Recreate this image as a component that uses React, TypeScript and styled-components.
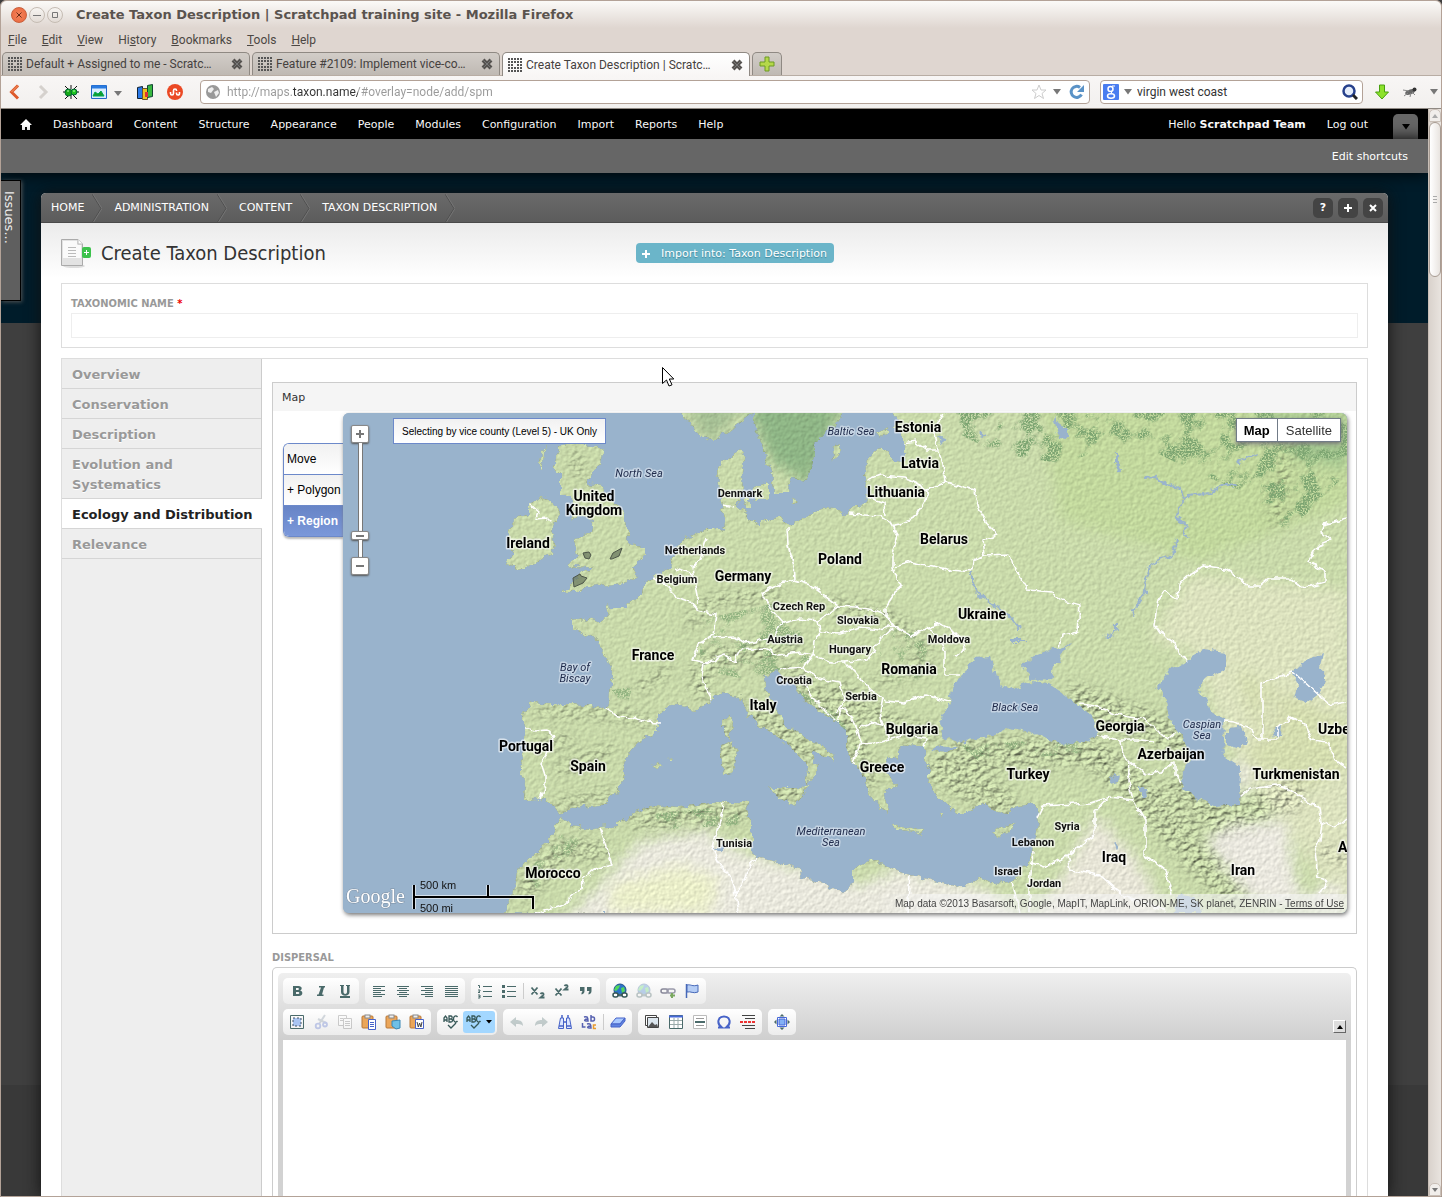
import React, { ReactNode } from "react";
import styled, { createGlobalStyle, css } from "styled-components";

const sans = '"DejaVu Sans", Verdana, sans-serif';
const condensed = '"DejaVu Sans Condensed", "DejaVu Sans", sans-serif';
const chromeFont = 'Roboto, "Open Sans", sans-serif';
const arial = '"Liberation Sans", Arial, sans-serif';

const GlobalStyle = createGlobalStyle`
  * { box-sizing: border-box; }
  body { margin: 0; font-family: ${sans}; font-size: 11px; color: #333; background: #3f3f3f; }
  button, input { font: inherit; color: inherit; margin: 0; }
  button { padding: 0; border: 0; background: none; cursor: default; }
  a { color: inherit; text-decoration: none; }
  ul, ol { list-style: none; margin: 0; padding: 0; }
`;

/* ---------- browser window ---------- */

const Window = styled.div`
  height: 100vh;
  display: flex;
  flex-direction: column;
  overflow: hidden;
  position: relative;
  border: 1px solid #b3a297;
  border-radius: 6px 6px 0 0;
  background: #dfd6d0;
`;

const TitleBar = styled.header`
  flex: none;
  height: 27px;
  display: flex;
  align-items: center;
  gap: 2px;
  padding-left: 10px;
  background: linear-gradient(#fbfaf8, #dfd6d0);
  border-radius: 6px 6px 0 0;
`;

const WindowTitle = styled.h1`
  margin: 0 0 0 11px;
  font: bold 13px/24px ${sans};
  color: #5a534e;
`;

const WindowButton = styled.button<{ $close?: boolean }>`
  width: 16px;
  height: 16px;
  display: grid;
  place-items: center;
  border-radius: 50%;
  border: 1px solid ${(p) => (p.$close ? "#c9603c" : "#c5bcb3")};
  background: ${(p) => (p.$close ? "radial-gradient(#f4845c, #e8653b)" : "linear-gradient(#f7f5f2, #e2dbd5)")};
  svg { display: block; }
`;

const MenuBar = styled.nav`
  flex: none;
  height: 24px;
  display: flex;
  gap: 15px;
  padding-left: 7px;
  font: 12px/24px ${chromeFont};
  color: #4c4743;
`;

const TabStrip = styled.div`
  flex: none;
  height: 24px;
  display: flex;
  align-items: stretch;
  gap: 2px;
  padding-left: 1px;
  border-bottom: 1px solid #b8ada4;
`;

const BrowserTab = styled.div<{ $active?: boolean }>`
  width: 248px;
  display: flex;
  align-items: center;
  gap: 3px;
  padding: 0 5px 0 4px;
  border: 1px solid #8f8983;
  border-bottom: 0;
  border-radius: 5px 5px 0 0;
  font: 12px/22px ${chromeFont};
  color: #45413e;
  background: ${(p) => (p.$active ? "linear-gradient(#fff, #f8f6f5)" : "linear-gradient(#d2cdc8, #bfb9b3)")};
  margin-bottom: ${(p) => (p.$active ? "-1px" : "0")};
  span { flex: 1; white-space: nowrap; overflow: hidden; }
  button { width: 14px; height: 14px; }
  svg { display: block; }
`;

const NewTab = styled.button`
  width: 30px;
  display: grid;
  place-items: center;
  border: 1px solid #8f8983;
  border-bottom: 0;
  border-radius: 5px 5px 0 0;
  background: linear-gradient(#d2cdc8, #bfb9b3);
`;

const NavBar = styled.div`
  flex: none;
  height: 33px;
  display: flex;
  align-items: center;
  gap: 10px;
  padding: 0 2px 0 4px;
  background: linear-gradient(#f8f6f5, #f2f0ee);
  border-bottom: 1px solid #8f8983;
`;

const NavButtons = styled.div`
  display: flex;
  align-items: center;
  gap: 8px;
  width: 185px;
`;

const IconButton = styled.button<{ $w?: number }>`
  width: ${(p) => p.$w || 20}px;
  height: 20px;
  display: grid;
  place-items: center;
  flex: none;
`;

const Field = styled.div<{ $width?: number }>`
  height: 24px;
  ${(p) => (p.$width ? css`width: ${p.$width}px; flex: none;` : css`flex: 1;`)}
  display: flex;
  align-items: center;
  gap: 4px;
  padding: 0 2px;
  border: 1px solid #b3a297;
  border-radius: 4px;
  background: #fff;
`;

const AddressInput = styled.input`
  flex: 1;
  min-width: 0;
  height: 20px;
  padding: 0;
  border: 0;
  outline: 0;
  font: 12px/20px ${chromeFont};
  color: transparent;
  background: linear-gradient(90deg, #999 0 66px, #333 66px 131px, #999 131px);
  background-clip: text;
  -webkit-background-clip: text;
`;

const SearchInput = styled.input`
  flex: 1;
  min-width: 0;
  padding: 0;
  border: 0;
  outline: 0;
  background: none;
  font: 12px/20px ${chromeFont};
  color: #333;
`;

const Viewport = styled.div`
  flex: 1;
  min-height: 0;
  display: flex;
`;

const Page = styled.div`
  flex: 1;
  min-width: 0;
  display: flex;
  flex-direction: column;
  position: relative;
  overflow: hidden;
`;

const ScrollTrack = styled.div`
  flex: none;
  width: 13px;
  display: flex;
  flex-direction: column;
  border-left: 1px solid #c9bfb7;
  background: linear-gradient(90deg, #d9d2cc, #e9e4df);
`;

const ScrollStep = styled.button`
  height: 13px;
  display: grid;
  place-items: center;
  border: 1px solid #c9bfb7;
  border-radius: 5px 5px 0 0;
  background: #f1eeeb;
`;

const ScrollThumb = styled.div`
  height: 155px;
  display: grid;
  place-items: center;
  border: 1px solid #a89c93;
  border-radius: 6px;
  background: linear-gradient(90deg, #fff, #e9e4e0);
`;

const ScrollSpace = styled.div`
  flex: 1;
`;

/* ---------- site administration bars ---------- */

const AdminBar = styled.nav`
  flex: none;
  height: 30px;
  display: flex;
  align-items: center;
  gap: 21px;
  padding: 2px 10px 0 19px;
  font: 11px/28px ${sans};
  color: #fff;
  background: #000;
  svg { display: block; }
`;

const Grow = styled.span`
  flex: 1;
`;

const DrawerToggle = styled.button`
  width: 25px;
  height: 25px;
  align-self: flex-end;
  margin-left: 4px;
  display: grid;
  place-items: center;
  border-radius: 5px 5px 0 0;
  background: #666;
`;

const ShortcutBar = styled.div`
  flex: none;
  height: 34px;
  display: flex;
  justify-content: flex-end;
  padding-right: 20px;
  font: 11px/36px ${sans};
  color: #fff;
  background: #666;
  z-index: 1;
  box-shadow: 0 0 16px #000;
`;

const Backdrop = styled.div`
  flex: 1;
  min-height: 0;
  display: flex;
  padding: 20px 40px 0;
  background: linear-gradient(#001c2a 0 150px, #3f3f3f 150px 912px, #393939 912px);
`;

const IssuesTab = styled.button`
  position: absolute;
  left: 0;
  top: 71px;
  width: 20px;
  height: 121px;
  padding: 10px 3px 0 0;
  writing-mode: vertical-rl;
  text-align: left;
  font: 13px/14px ${sans};
  color: #eee;
  background: #5f5f5f;
  border: 1px solid #000;
  border-left: 0;
  box-shadow: 1px 1px 4px #555;
  z-index: 2;
`;

/* ---------- overlay panel ---------- */

const Panel = styled.main`
  flex: 1;
  min-width: 0;
  display: flex;
  flex-direction: column;
  background: #fff;
  border-radius: 5px 5px 0 0;
  box-shadow: 0 0 16px #111;
`;

const Crumbs = styled.nav`
  flex: none;
  height: 30px;
  display: flex;
  align-items: center;
  font: 11px/30px ${sans};
  color: #fff;
  background: linear-gradient(#6a6a6a, #5c5c5c);
  border-bottom: 1px solid #4a4a4a;
  border-radius: 5px 5px 0 0;
  padding: 1px 0 0 10px;
  overflow: hidden;
`;

const Crumb = styled.a`
  display: flex;
  align-items: center;
  gap: 8px;
  padding-right: 12px;
  text-transform: uppercase;
  svg { display: block; }
`;

const PanelButton = styled.button`
  width: 20px;
  height: 20px;
  margin-right: 5px;
  border-radius: 5px;
  background: #444;
  color: #fff;
  display: grid;
  place-items: center;
  line-height: 20px;
  svg { display: block; }
`;

const PanelBody = styled.div`
  flex: 1;
  min-height: 0;
  display: flex;
  flex-direction: column;
  padding: 15px 20px 0;
  background: linear-gradient(#ebebeb, #fff 55px);
`;

const Heading = styled.div`
  display: grid;
  grid-template-columns: 575px auto 1fr;
  align-items: center;
  height: 30px;
  margin-bottom: 15px;
  h2 {
    display: flex;
    align-items: center;
    gap: 10px;
    margin: 0;
    font: 20px/30px ${condensed};
    color: #333;
  }
`;

const ImportButton = styled.a`
  display: flex;
  align-items: center;
  gap: 10px;
  height: 20px;
  padding: 1px 7px 0 5px;
  border-radius: 4px;
  font: 11px/19px ${sans};
  color: #fff;
  background: #6bb5c9;
  text-shadow: 0 1px 1px #3f8599;
`;

const labelText = css`
  font: bold 11px/14px ${condensed};
  text-transform: uppercase;
  color: #999;
`;

const NameBox = styled.div`
  height: 65px;
  display: flex;
  flex-direction: column;
  gap: 2px;
  padding: 13px 9px 9px;
  margin-bottom: 10px;
  border: 1px solid #ddd;
  background: #fff;
  label { ${labelText} }
  label b { color: #e00; }
  input { height: 25px; width: 100%; padding: 4px; border: 1px solid #eee; background: #fff; outline: 0; }
`;

const Tabbed = styled.div`
  flex: 1;
  min-height: 0;
  display: flex;
  border: 1px solid #ddd;
  border-bottom: 0;
`;

const TabColumn = styled.ul`
  flex: none;
  width: 200px;
  background: #eee;
  border-right: 1px solid #ccc;
`;

const TabItem = styled.li<{ $active?: boolean }>`
  padding: 6px 10px 3px;
  border-bottom: 1px solid #d5d5d5;
  font: bold 13px/20px ${sans};
  color: ${(p) => (p.$active ? "#222" : "#999")};
  text-shadow: ${(p) => (p.$active ? "none" : "0 1px 0 #fff")};
  background: ${(p) => (p.$active ? "#fff" : "transparent")};
  margin-right: ${(p) => (p.$active ? "-1px" : "0")};
  white-space: ${(p) => (p.$active ? "nowrap" : "normal")};
`;

const Pane = styled.section`
  flex: 1;
  min-width: 0;
  display: flex;
  flex-direction: column;
  padding: 23px 10px 0;
`;

const MapBox = styled.section`
  flex: none;
  border: 1px solid #ccc;
  margin-bottom: 17px;
  h3 { margin: 0 0 2px; height: 28px; padding-left: 9px; font: 11px/30px ${sans}; color: #333; background: #f5f5f5; }
`;

const MapRow = styled.div`
  display: flex;
  align-items: flex-start;
  padding: 0 9px 20px 10px;
`;

const MapTools = styled.div`
  flex: none;
  width: 60px;
  margin-top: 30px;
  border: 1px solid #6c89ca;
  border-right: 0;
  border-radius: 6px 0 0 6px;
  overflow: hidden;
  box-shadow: 0 2px 2px #bbb;
`;

const MapTool = styled.button<{ $on?: boolean }>`
  display: block;
  width: 100%;
  height: ${(p) => (p.$on ? 30 : 31)}px;
  padding-left: 3px;
  text-align: left;
  white-space: nowrap;
  font: ${(p) => (p.$on ? "bold" : "normal")} 12px/30px ${arial};
  color: ${(p) => (p.$on ? "#fff" : "#000")};
  background: ${(p) => (p.$on ? "linear-gradient(#6784c6, #7b98da)" : "linear-gradient(#f1f1f1, #fff)")};
  border-bottom: ${(p) => (p.$on ? "0" : "1px solid #6c89ca")};
`;

const MapCanvas = styled.div`
  flex: 1;
  min-width: 0;
  height: 500px;
  position: relative;
  overflow: hidden;
  border-radius: 6px;
  background: #99b3cc;
  box-shadow: 1px 2px 4px #777;
`;

const MapDrawing = styled.svg`
  display: block;
  width: 100%;
  height: 100%;
  font-family: Roboto, sans-serif;
`;

const MapNotice = styled.div`
  position: absolute;
  left: 50px;
  top: 5px;
  height: 26px;
  padding: 0 8px;
  border: 1px solid #6c89ca;
  font: 10px/25px ${arial};
  color: #000;
  background: linear-gradient(#f1f1f1, #fff);
`;

const MapTypes = styled.div`
  position: absolute;
  right: 6px;
  top: 5px;
  height: 24px;
  display: flex;
  border: 1px solid #717b87;
  box-shadow: 0 2px 4px #777;
  background: #fff;
  font: 13px/22px ${arial};
  button { padding: 1px 8px 0; color: #333; }
  button:first-child { padding: 1px 7px 0; font-weight: bold; color: #000; border-right: 1px solid #717b87; }
`;

const Zoomer = styled.div`
  position: absolute;
  left: 8px;
  top: 12px;
  height: 150px;
  width: 18px;
  display: flex;
  flex-direction: column;
  align-items: center;
`;

const ZoomKey = styled.button<{ $h?: number }>`
  flex: none;
  width: 18px;
  height: ${(p) => p.$h || 18}px;
  display: grid;
  place-items: center;
  border: 1px solid #888;
  border-radius: 2px;
  background: #fff;
  box-shadow: 0 1px 2px #555;
  svg { display: block; }
`;

const ZoomRail = styled.div<{ $h: number }>`
  flex: none;
  width: 5px;
  height: ${(p) => p.$h}px;
  background: #fff;
  border: 1px solid #777;
  border-width: 0 1px;
`;

const MapCredit = styled.div`
  position: absolute;
  right: 0;
  bottom: 0;
  padding: 0 3px 0 18px;
  font: 10px/19px ${arial};
  color: #444;
  background: linear-gradient(90deg, rgba(245, 245, 245, 0), rgba(245, 245, 245, 0.6) 50px);
  a { text-decoration: underline; }
`;

/* ---------- rich text editor ---------- */

const EditorLabel = styled.h3`
  ${labelText}
  margin: 0 0 2px;
`;

const Editor = styled.div`
  flex: 1;
  min-height: 0;
  display: flex;
  flex-direction: column;
  padding: 5px 5px 0;
  border: 1px solid #ccc;
  border-bottom: 0;
  border-radius: 5px 5px 0 0;
`;

const EditorTools = styled.div`
  flex: none;
  display: flex;
  align-items: flex-end;
  padding: 5px;
  border-radius: 5px 5px 0 0;
  background: linear-gradient(#efefef, #cfcfcf);
`;

const ToolRows = styled.div`
  flex: 1;
  display: flex;
  flex-direction: column;
  gap: 5px;
`;

const ToolRow = styled.div`
  display: flex;
  gap: 6px;
`;

const ToolGroup = styled.div`
  height: 26px;
  display: flex;
  align-items: center;
  padding: 0 2px;
  border-radius: 5px;
  background: linear-gradient(#fff, #ececec);
`;

const Tool = styled.button<{ $off?: boolean; $on?: boolean }>`
  width: ${(p) => (p.$on ? 32 : 24)}px;
  height: 22px;
  display: flex;
  align-items: center;
  justify-content: center;
  border-radius: 3px;
  background: ${(p) => (p.$on ? "#a3d7ff" : "transparent")};
  svg { display: block; opacity: ${(p) => (p.$off ? 0.3 : 1)}; }
`;

const ToolDivider = styled.span`
  width: 1px;
  height: 16px;
  margin: 0 2px;
  background: #ccc;
`;

const Collapse = styled.button`
  width: 13px;
  height: 13px;
  margin-bottom: 2px;
  display: grid;
  place-items: center;
  background: #ddd;
  border: 1px solid #888;
  border-color: #fff #666 #666 #fff;
`;

const EditorText = styled.div`
  flex: 1;
  border: 5px solid #d2d2d2;
  border-width: 0 5px;
  background: #fff;
  outline: 0;
`;

const Pointer = styled.svg`
  position: absolute;
  left: 660px;
  top: 365px;
  z-index: 5;
  pointer-events: none;
`;

/* ---------- icons ---------- */

const Svg = ({ s = 16, w, children }: { s?: number; w?: number; children: ReactNode }) => (
  <svg width={w || s} height={s} viewBox={`0 0 ${w || s} ${s}`} fill="none" aria-hidden="true">{children}</svg>
);

const Caret = ({ fill = "#777" }: { fill?: string }) => <Svg s={6} w={8}><path d="M0 0h8L4 5.500z" fill={fill} /></Svg>;

const GridIcon = () => (
  <Svg>
    {[0, 1, 2, 3, 4].flatMap((r) => [0, 1, 2, 3, 4].map((c) =>
      r === 2 && c === 2 ? null : (
        <rect key={`${r}${c}`} x={c * 3 + 1} y={r * 3 + 1} width="2" height="2" fill="#555" shapeRendering="crispEdges" />)))}
  </Svg>
);

const CloseIcon = () => (
  <Svg s={14}><path d="M3 3l8 8M11 3l-8 8" stroke="#55524f" strokeWidth="4" /><path d="M3.500 3.500l7 7M10.500 3.500l-7 7" stroke="#777" strokeWidth="1" /></Svg>
);

const teal = "#4a6a6a";
const stroke = { stroke: teal, strokeWidth: 1 };
const icons: Record<string, ReactNode> = {
  bold: <path d="M4 3h5.500c4 0 4 4 1.500 4.500 3.500.5 3 5.500-1 5.500H4V3m3 2v2h2c1.200 0 1.200-2 0-2zm0 4v2h2.200c1.500 0 1.500-2 0-2z" fill={teal} fillRule="evenodd" />,
  italic: <path d="M6 3h6v1.500h-1L9 11.500h1.500V13H4v-1.500h1.500l2.500-7H6z" fill={teal} />,
  underline: <path d="M3 2h4v1H6.500v6c0 2.500 3.500 2.500 3.500 0V3H9V2h4v1h-.5v6c0 5-8.500 5-8.500 0V3H3zM3 13h10v2H3z" fill={teal} />,
  left: <path d="M2 3.500h12M2 5.500h8M2 7.500h12M2 9.500h8M2 11.500h12M2 13.500h9" {...stroke} />,
  center: <path d="M2 3.500h12M4 5.500h8M2 7.500h12M4 9.500h8M2 11.500h12M4 13.500h8" {...stroke} />,
  right: <path d="M2 3.500h12M6 5.500h8M2 7.500h12M6 9.500h8M2 11.500h12M6 13.500h8" {...stroke} />,
  justify: <path d="M2 3.500h13M2 5.500h13M2 7.500h13M2 9.500h13M2 11.500h13M2 13.500h13" {...stroke} />,
  ol: <path d="M6 3.500h9M6 8.500h9M6 13.500h9M1 2.500h1.500V5M1 7h2v1L1 9.500h2M1 12h2v1.500H1.500M3 13.500V15H1" {...stroke} />,
  ul: <><path d="M6 3.500h9M6 8.500h9M6 13.500h9" {...stroke} /><path d="M1 2h3v3H1zM1 7h3v3H1zM1 12h3v3H1z" fill={teal} /></>,
  sub: <path d="M1.500 4.500l6 7M7.500 4.500l-6 7M10.500 11c1-1.500 3.500-1 3 .8L10.500 14.500h4" stroke={teal} strokeWidth="1.800" />,
  sup: <path d="M1.500 5.500l6 7M7.500 5.500l-6 7M10.500 3c1-1.500 3.500-1 3 .8L10.500 6.500h4" stroke={teal} strokeWidth="1.800" />,
  quote: <path d="M2 4h4.500v4c0 2-1 3-3 3.500V10l1-2H2zM9 4h4.500v4c0 2-1 3-3 3.500V10l1-2H9z" fill={teal} />,
  link: <><circle cx="8" cy="7" r="6" fill="#2d74c8" stroke="#21508c" /><path d="M4 3l4-1-1 3-3 3-2-1zM9 5l3-1 1 4-3 2z" fill="#52d95a" /><path d="M4 12h8" stroke={teal} strokeWidth="2" /><rect x="1" y="10" width="5" height="4" rx="2" fill="#fff" stroke="#355" strokeWidth="1.500" /><rect x="10" y="10" width="5" height="4" rx="2" fill="#fff" stroke="#355" strokeWidth="1.500" /></>,
  anchorLink: <><rect x="1" y="6" width="7" height="4" rx="2" stroke="#889" strokeWidth="1.500" /><rect x="7" y="6" width="8" height="4" rx="2" stroke="#99a" strokeWidth="1.500" /><path d="M12 10v5M10 12.500h5" stroke="#7aa860" strokeWidth="2" /></>,
  flag: <><path d="M2.500 1v14" stroke="#4668b8" strokeWidth="1.500" /><path d="M3 2c4-1 5 2 11 0v7c-5 2-7-1-11 0z" fill="#b5cdf5" stroke="#4668b8" /></>,
  select: <><path d="M1.500 1.500h13v13h-13z" stroke={teal} /><path d="M4 4h8v8H4z" fill="#a9c4f2" stroke="#456" strokeDasharray="2 2" /></>,
  cut: <><path d="M12 1L6 10M5 5l8 4" stroke="#789" strokeWidth="2" /><circle cx="5" cy="12" r="2.300" stroke="#4763c8" strokeWidth="1.800" /><circle cx="12" cy="10.500" r="2" stroke="#4763c8" strokeWidth="1.800" /></>,
  copy: <><path d="M1.500 1.500h8v10h-8z" stroke="#666" fill="#fff" /><path d="M6.500 4.500h8v10h-8zM8 7.500h5M8 9.500h5M8 11.500h5M3 4.500h3M3 6.500h3" stroke="#666" fill="#fff" /></>,
  paste: <><rect x="1" y="2" width="11" height="12" rx="1" fill="#eba65a" stroke="#b87838" /><rect x="4" y="1" width="5" height="3" fill="#eee" stroke="#888" /><path d="M7.500 5.500h7v10h-7z" fill="#fff" stroke="#4763c8" /><path d="M9 8.500h4M9 10.500h4M9 12.500h4" stroke="#4763c8" /></>,
  pasteText: <><rect x="1" y="2" width="11" height="12" rx="1" fill="#eba65a" stroke="#b87838" /><rect x="4" y="1" width="5" height="3" fill="#eee" stroke="#888" /><path d="M7 7l8-1v8l-4 1-4-3z" fill="#6fc0e6" stroke="#3a87b5" /></>,
  pasteWord: <><rect x="1" y="2" width="11" height="12" rx="1" fill="#eba65a" stroke="#b87838" /><rect x="4" y="1" width="5" height="3" fill="#eee" stroke="#888" /><path d="M6.500 5.500h8v9h-8z" fill="#fff" stroke="#4763c8" /><path d="M8 8l1.300 5 1.300-4 1.300 4L13 8" stroke="#444" /></>,
  spell: <path d="M1 8V4l1.500-2L4 4v4M1 6h3M6 2v6h2c2 0 2-3 0-3H6h2c1.500 0 1.500-3 0-3zM14.500 3c-1.500-2-4-1-4 2s2.500 4 4 2M5 11l3 3 5-5" stroke="#365757" strokeWidth="1.300" />,
  undo: <path d="M1 8l6-5v3c5 0 7 2 7 6-2-2-4-2-7-2v3z" fill={teal} />,
  redo: <path d="M15 8L9 3v3c-5 0-7 2-7 6 2-2 4-2 7-2v3z" fill={teal} />,
  find: <><path d="M3.500 4L1.500 14.500h5V4zM9.500 4v10.500h5L12.500 4z" fill="#dce6ff" stroke="#4763c8" /><path d="M5 1v3M11 1v3M6 8h4M2 12h4M10 12h4" stroke="#4763c8" strokeWidth="1.500" /></>,
  replace: <><path d="M3 3c3-1 4 0 4 4H5C3 7 3 5 7 5M10 1v6h2c2 0 2-4 0-4h-2M6 10c3-1 4 0 4 4H8c-2 0-2-2 2-2M1.500 9v4h3" stroke="#5560b0" strokeWidth="1.500" /><path d="M15 11h-2.500v3.500H15" stroke="#e79a2f" strokeWidth="1.500" /></>,
  erase: <><path d="M1 10l5-6h9l-5 6z" fill="#a9c9ff" stroke="#4763c8" /><path d="M1 10v3h9l5-6V4l-5 6z" fill="#5e83e0" stroke="#4763c8" /></>,
  image: <><path d="M1.500 1.500h11v10h-11z" fill="#fff" stroke="#444" /><path d="M3.500 3.500h11v10h-11z" fill="#dce6ee" stroke="#444" /><path d="M4 13l4-5 3 3 2-1 1 3z" fill="#555" /></>,
  table: <><path d="M1.500 1.500h13v13h-13z" fill="#fff" stroke={teal} /><path d="M1 2.500h14" stroke="#4668d8" strokeWidth="2" /><path d="M2 6.500h12M2 10.500h12M6 4v10M10 4v10" stroke="#9aa" /></>,
  rule: <><path d="M1.500 1.500h13v13h-13z" fill="#fff" stroke="#bbb" /><path d="M4 4.500h8M4 11.500h8" stroke="#999" /><path d="M3 8h10" stroke={teal} strokeWidth="2" /></>,
  omega: <path d="M2 13.500h4c-6-4-4-11 2-11s8 7 2 11h4" stroke="#4763c8" strokeWidth="2" />,
  pagebreak: <><path d="M2 1.500h13M5 4.500h10M2 11.500h13M5 14.500h10" stroke="#444" /><path d="M0 8h16" stroke="#e33" strokeWidth="2" strokeDasharray="3 1" /></>,
  maximize: <><path d="M3.500 3.500h9v9h-9z" fill="#fff" stroke="#4668d8" /><path d="M5 5h6v6H5z" fill="#84b1f5" stroke="#4668d8" /><path d="M8 0l2.500 2.500h-5zM8 16l2.500-2.500h-5zM0 8l2.500-2.500v5zM16 8l-2.500-2.500v5z" fill={teal} /></>,
};

const T = ({ name, off }: { name: string; off?: boolean }) => (
  <Tool type="button" aria-label={name} $off={off} disabled={off}><Svg>{icons[name]}</Svg></Tool>
);

/* ---------- map data ---------- */

const LAND = [
  "M893 413 897 421 893 430 903 430 903 463 894 462 886 450 880 448 867 460 864 477 868 493 866 502 853 507 849 513 843 515 835 508 826 507 813 513 797 523 790 526 780 517 768 520 758 525 750 521 746 513 737 507 743 493 742 473 745 453 740 449 730 460 720 462 717 470 718 487 723 507 725 523 723 530 707 530 687 537 680 543 675 553 668 570 653 577 643 582 642 595 627 603 628 608 610 608 605 603 608 617 600 622 590 618 573 622 573 630 587 635 598 640 602 650 610 667 612 673 609 703 605 708 573 705 547 705 537 702 522 710 525 727 525 750 518 773 525 780 524 800 540 799 552 803 560 815 573 808 600 805 617 793 625 777 622 763 633 747 658 730 658 713 673 705 680 703 693 712 712 700 723 692 740 697 747 713 760 727 783 740 797 753 808 767 805 785 817 773 818 765 813 757 812 750 832 760 835 756 823 747 803 735 787 727 777 710 767 693 765 677 777 669 783 683 793 683 803 697 820 712 837 722 847 732 846 747 853 763 862 773 867 787 873 800 887 813 885 793 897 787 883 770 887 757 897 760 897 750 910 745 925 748 925 753 923 760 930 770 927 783 935 793 943 803 957 812 970 812 980 803 997 812 1007 815 1017 805 1033 803 1038 813 1037 833 1030 857 1020 873 1012 882 993 883 980 878 963 887 940 882 910 875 888 868 877 860 863 862 853 870 853 883 843 893 823 883 802 878 798 868 780 862 758 858 752 850 752 823 745 813 750 803 740 802 720 802 680 807 653 805 633 813 617 825 593 828 570 825 562 817 557 823 550 840 530 857 517 870 515 890 503 913 1360 930 1360 400 893 400z",
  "M560 445 580 442 603 450 600 463 590 477 587 483 603 485 610 497 623 513 628 533 627 543 643 547 643 557 633 570 640 575 630 582 607 585 590 587 580 590 572 590 562 596 573 580 580 573 593 568 567 565 578 557 573 537 590 535 593 520 582 515 572 520 573 497 560 497 560 473 553 468z",
  "M540 498 553 502 562 513 553 527 555 543 552 555 520 570 507 565 513 550 507 540 512 520 530 513 530 505z",
  "M680 413 688 420 700 438 713 440 730 430 752 413 752 400 680 400z",
  "M753 413 753 420 762 447 770 470 775 493 787 493 790 478 807 480 813 453 818 437 836 427 842 413 842 400 753 400z",
  "M752 487 768 482 768 500 755 500zM743 500 751 500 751 508 745 508zM832 453 838 443 840 450 834 461zM793 498 798 501 793 503zM876 432 888 428 888 434 880 437z",
  "M723 722 730 713 733 726 729 739 724 732zM720 746 732 741 736 750 733 773 723 774zM767 788 797 788 809 785 797 805 777 798zM893 823 903 827 923 829 921 833 895 829zM993 832 1001 829 1015 821 1008 833 998 836zM652 766 660 761 663 766 657 769zM668 759 673 758 672 761zM542 452 545 445 543 465 539 470zM940 812 945 811 942 818z",
].join("");

const SEAS = [
  "M940 723 943 712 950 703 953 683 967 672 970 663 973 658 990 657 995 675 1007 690 1027 682 1050 683 1073 700 1093 717 1097 737 1083 743 1053 742 1030 732 1010 728 993 735 973 740 957 742 943 737z",
  "M1023 665 1035 655 1050 650 1070 645 1063 652 1055 665 1051 679 1030 680z",
  "M931 751 941 745 957 748 948 753z",
  "M1188 660 1203 649 1227 652 1227 668 1207 678 1197 690 1207 697 1210 710 1223 720 1225 757 1240 767 1239 805 1217 807 1197 798 1182 788 1183 770 1190 757 1183 738 1170 720 1167 700 1157 687 1167 673z",
  "M1227 728 1240 727 1248 742 1237 748 1227 745z",
  "M1293 673 1305 661 1323 653 1320 666 1327 680 1320 693 1307 703 1292 697 1297 685z",
  "M1173 913 1180 893 1197 900 1203 913zM1273 730 1282 727 1281 735 1275 736zM1108 778 1120 773 1118 782 1110 784zM1140 785 1145 788 1146 800 1140 796zM1053 418 1067 428 1067 438 1059 437zM938 436 944 438 943 446zM980 432 986 434 982 437zM1114 842 1120 847 1117 851zM712 849 722 846 722 852z",
].join("");

const RIVERS = [
  "1117 453 1117 463 1119 471", "1145 478 1155 477 1165 483 1180 488 1184 497 1190 496 1208 493 1225 485 1238 486",
  "1187 498 1178 507 1177 517 1185 523 1184 533 1189 538", "1177 540 1172 555 1160 560 1150 565 1147 580 1145 592 1136 605 1134 617",
  "1104 638 1116 630 1116 624", "1238 464 1247 457 1256 453", "972 574 972 585 983 597 996 606 1010 617 1020 628", "1012 640 1025 640",
];

const BORDERS = [
  "525 728 530 728 535 731 547 730 553 735 547 755 541 763 545 775 545 785 540 799",
  "605 708 617 716 632 718 645 722 660 723", "530 505 538 512 536 519 548 518 553 523",
  "600 828 606 845 612 865 595 870 583 880 582 888 562 905 545 910 535 913",
  "724 803 720 820 712 850 720 865 730 875 735 893 738 913", "757 858 748 870 742 885 735 893", "910 875 907 913",
  "653 577 663 583 670 590 677 597 690 602 697 610 716 614 713 636 700 643 693 660 705 663 702 680 708 693 712 700",
  "707 538 700 560 692 566 694 580 697 595 697 605", "675 568 685 572 693 575",
  "713 638 735 637 745 643 760 640 775 638", "705 663 725 655 735 662 740 650 765 648 780 655 800 652 812 655",
  "723 505 735 507", "787 528 788 545 794 565 795 580 780 583 763 593 770 607 783 622 775 638",
  "795 580 810 585 820 592 838 606 825 615 818 620 800 618 783 622", "838 606 855 607 875 610 885 614",
  "812 655 813 640 820 632 818 620", "820 632 840 633 860 627 880 629 893 626 885 614",
  "849 514 880 516 890 522 898 535 893 555 893 568 900 585 885 608 885 614",
  "867 480 880 475 905 477 922 485 928 495 917 515 900 524 893 525", "868 497 884 503 885 516",
  "903 443 915 441 928 450 938 450", "943 413 935 432 938 450 943 465 946 482",
  "926 490 935 487 946 482 965 487 975 490 980 510 990 527 997 535 983 540 985 555 973 560 972 572 950 570 933 566 910 562 895 567",
  "985 556 1010 555 1013 565 1028 590 1052 592 1062 600 1080 605 1078 632 1062 635 1060 647",
  "893 626 910 636 928 628 940 624 953 630 963 640 965 650 955 658", "928 628 940 640 945 652 945 675 960 675",
  "893 628 880 640 868 660 845 662 830 662 812 655", "845 662 855 672 870 690 883 697 880 712 883 725 888 740 905 735 927 738 925 748",
  "883 697 887 701 905 703 925 695 950 702", "888 740 875 744 860 745 853 763", "837 722 840 708 850 715 857 730 862 745",
  "860 728 872 723 883 725", "803 668 818 678 840 682 845 700 835 712", "805 680 812 697 835 720", "780 670 803 668 812 655",
  "1188 661 1178 653 1173 640 1160 633 1154 624 1158 600 1165 590 1177 600 1178 585 1190 575 1203 566 1222 568 1240 578 1247 586 1260 586 1270 578 1290 578 1303 588 1325 582 1325 572 1308 562 1318 545 1330 540 1320 532 1322 525 1335 522 1347 518",
  "1262 739 1262 682 1293 672 1330 705 1347 702",
  "1223 722 1235 723 1248 727 1258 739 1277 739 1277 728 1290 717 1305 725 1312 740 1328 742 1335 760 1347 768",
  "1240 797 1250 788 1275 784 1290 790 1305 800 1320 808 1322 822 1320 840 1315 850 1318 878 1328 882 1320 895",
  "1322 822 1335 828 1347 818", "1080 704 1095 706 1120 715 1145 720 1168 740 1177 732", "1097 735 1120 740 1140 740 1155 742",
  "1120 740 1122 755 1130 762 1128 780 1133 800 1145 820 1145 840 1145 855 1165 870 1172 893",
  "1130 762 1145 775 1160 772 1175 763 1175 775 1180 783", "1037 818 1043 806 1060 805 1090 803 1110 797 1133 800",
  "1108 798 1095 812 1095 835 1067 855 1045 867 1030 862", "1033 850 1030 885 1030 913", "1067 855 1070 870 1100 875 1125 897 1165 910",
  "1012 882 1020 913",
];

const COUNTIES = "M583 553l6-1 2 3-2 4-4-1zM610 559l3-6 9-5-3 8-7 3zM573 578l7-4 1 2 6 2-4 5-9 4z";

const BIG: [string, number, number][] = [
  ["Estonia", 918, 432], ["Latvia", 920, 468], ["Lithuania", 896, 497], ["Belarus", 944, 544], ["Poland", 840, 564],
  ["Germany", 743, 581], ["Ukraine", 982, 619], ["France", 653, 660], ["Romania", 909, 674], ["Italy", 763, 710],
  ["Bulgaria", 912, 734], ["Greece", 882, 772], ["Portugal", 526, 751], ["Spain", 588, 771], ["Turkey", 1028, 779],
  ["Georgia", 1120, 731], ["Azerbaijan", 1171, 759], ["Turkmenistan", 1296, 779], ["Iraq", 1114, 862], ["Iran", 1243, 875],
  ["Morocco", 553, 878], ["United", 594, 501], ["Kingdom", 594, 515], ["Ireland", 528, 548],
];
const SMALL: [string, number, number][] = [
  ["Denmark", 740, 497], ["Netherlands", 695, 554], ["Belgium", 677, 583], ["Czech Rep", 799, 610], ["Slovakia", 858, 624],
  ["Austria", 785, 643], ["Hungary", 850, 653], ["Moldova", 949, 643], ["Croatia", 794, 684], ["Serbia", 861, 700],
  ["Tunisia", 734, 847], ["Syria", 1067, 830], ["Lebanon", 1033, 846], ["Israel", 1008, 875], ["Jordan", 1044, 887],
];
const WATER: [string, number, number][] = [
  ["North Sea", 639, 477], ["Baltic Sea", 851, 435], ["Bay of", 575, 671], ["Biscay", 575, 682], ["Black Sea", 1015, 711],
  ["Caspian", 1202, 728], ["Sea", 1202, 739], ["Mediterranean", 831, 835], ["Sea", 831, 846],
];

const area = { filterUnits: "userSpaceOnUse" as const, x: 343, y: 413, width: 1004, height: 500 };

const EuropeMap = () => (
  <MapDrawing viewBox="343 413 1004 500" preserveAspectRatio="xMidYMid slice" role="img" aria-label="Map of Europe">
    <defs>
      <clipPath id="land"><path d={LAND} /></clipPath>
      <filter id="soft" x="-20%" y="-20%" width="140%" height="140%"><feGaussianBlur stdDeviation="7" /></filter>
      <filter id="coast" {...area}>
        <feTurbulence type="fractalNoise" baseFrequency="0.12" numOctaves="4" seed="3" result="n" />
        <feDisplacementMap in="SourceGraphic" in2="n" scale="9" xChannelSelector="R" yChannelSelector="G" />
      </filter>
      <filter id="wobble" {...area}>
        <feTurbulence type="fractalNoise" baseFrequency="0.12" numOctaves="2" seed="3" result="n" />
        <feDisplacementMap in="SourceGraphic" in2="n" scale="7" xChannelSelector="R" yChannelSelector="G" />
      </filter>
      <filter id="plain" {...area} colorInterpolationFilters="sRGB">
        <feTurbulence type="fractalNoise" baseFrequency="0.12" numOctaves="4" seed="3" result="n" />
        <feDisplacementMap in="SourceGraphic" in2="n" scale="9" xChannelSelector="R" yChannelSelector="G" result="shape" />
        <feTurbulence type="fractalNoise" baseFrequency="0.25" numOctaves="3" seed="5" result="g" />
        <feDiffuseLighting in="g" surfaceScale="0.400" lightingColor="#fff" result="light"><feDistantLight azimuth="225" elevation="60" /></feDiffuseLighting>
        <feComposite in="light" in2="shape" operator="arithmetic" k1="1.150" k2="0" k3="0" k4="0" />
      </filter>
      <filter id="relief" {...area} colorInterpolationFilters="sRGB">
        <feTurbulence type="fractalNoise" baseFrequency="0.12" numOctaves="4" seed="3" result="n" />
        <feDisplacementMap in="SourceGraphic" in2="n" scale="9" xChannelSelector="R" yChannelSelector="G" result="shape" />
        <feTurbulence type="fractalNoise" baseFrequency="0.15 0.22" numOctaves="4" seed="5" result="g" />
        <feDiffuseLighting in="g" surfaceScale="2.200" lightingColor="#fff" result="light"><feDistantLight azimuth="225" elevation="60" /></feDiffuseLighting>
        <feComposite in="light" in2="shape" operator="arithmetic" k1="1.120" k2="0" k3="0" k4="0" />
      </filter>
      <filter id="forest" {...area}>
        <feTurbulence type="fractalNoise" baseFrequency="0.050" numOctaves="6" seed="8" result="n" />
        <feColorMatrix in="n" type="matrix" values="0 0 0 0 0  0 0 0 0 0  0 0 0 0 0  7 0 0 0 -3.400" result="m" />
        <feTurbulence type="fractalNoise" baseFrequency="0.600" numOctaves="2" seed="2" result="f" />
        <feColorMatrix in="f" type="matrix" values="0 0 0 0 0  0 0 0 0 0  0 0 0 0 0  5 0 0 0 -1.800" result="speck" />
        <feComposite in="SourceGraphic" in2="m" operator="in" result="a" />
        <feComposite in="a" in2="speck" operator="in" />
      </filter>
      <mask id="mountains" maskUnits="userSpaceOnUse" x="343" y="413" width="1004" height="500">
        <g filter="url(#soft)" stroke="#fff" strokeLinecap="round" strokeLinejoin="round" fill="none" strokeWidth="20">
          <path d="M700 690 705 660 740 655 790 645" />
          <path d="M755 710 810 755M800 790 778 793M790 675 850 725 870 780M840 690 890 725 930 735" />
          <path d="M835 605 885 615 920 640 925 665 880 680" strokeWidth="14" />
          <path d="M540 712 600 712 650 722M560 770 610 750M560 805 610 795M535 745 570 740" strokeWidth="12" />
          <path d="M525 890 560 850 600 850M640 820 740 812" />
          <path d="M940 770 1000 800M960 755 1090 750 1140 790 1190 850 1230 890M1080 700 1180 740M1180 790 1220 820 1290 795" strokeWidth="32" />
          <path d="M575 455 580 475M725 725 728 770M690 625 712 600 780 595M640 690 665 670" strokeWidth="12" />
          <path d="M1290 440 1275 520M1320 850 1347 860" strokeWidth="12" />
        </g>
      </mask>
      <g id="terrain" clipPath="url(#land)">
        <rect x="330" y="400" width="1030" height="530" fill="#cadbab" />
        <g filter="url(#soft)">
          <path d="M1040 400 1360 400 1360 500 1200 560 1060 520z" fill="#c3d99e" />
          <path d="M1190 575 1347 590 1360 930 1240 770 1190 650 1150 640z" fill="#dde3bf" />
          <path d="M590 895 640 842 705 830 735 850 860 885 900 868 990 890 1030 930 540 940z" fill="#eae9de" />
          <path d="M1060 880 1095 815 1130 850 1150 880 1170 940 1020 940z" fill="#e8e6d8" />
          <path d="M1205 840 1230 825 1285 820 1300 900 1340 880 1340 913 1250 900z" fill="#ebe9e0" />
          <path d="M1255 700 1285 690 1280 735 1262 740zM1232 760 1250 765 1248 790 1240 797z" fill="#eae8e0" />
          <path d="M610 885 680 865 720 880 710 913 610 913z" fill="#ebefca" />
          <path d="M1235 670 1260 740 1240 760 1300 790 1347 770 1347 720z" fill="#d3dcac" opacity="0.800" />
          <path d="M745 400 845 400 810 485 770 460z" fill="#8fb686" />
          <path d="M680 400 750 400 710 445z" fill="#a5bf94" />
          <path d="M1250 413 1347 413 1347 470 1300 460z" fill="#a5c791" />
        </g>
      </g>
    </defs>
    <rect x="343" y="413" width="1004" height="500" fill="#99b3cc" />
    <use href="#terrain" filter="url(#plain)" />
    <g mask="url(#mountains)"><use href="#terrain" filter="url(#relief)" /></g>
    <g clipPath="url(#land)">
      <g filter="url(#forest)" fill="#7da572">
        <path d="M945 413h402v60l-60 60-40-40-50-20-60-30-80 20-60-10-40-20z" />
        <path d="M700 620l90-20 20 60-60 20-50-10zM880 620l50 20-10 40-40 5zM790 685l50 30 30 60-30-30zM520 880l40-45 30-5-50 60zM612 690l20-3-5 20-15 0zM640 815l100-10v20l-90 5zM960 745l130-8v15l-110 10z" opacity="0.700" />
      </g>
    </g>
    <g filter="url(#coast)">
      <path d={SEAS} fill="#99b3cc" />
      <g fill="none" stroke="#99b3cc" strokeWidth="2">{RIVERS.map((r) => <polyline key={r} points={r} />)}</g>
    </g>
    <g filter="url(#wobble)" fill="none" stroke="#fff" strokeWidth="1.600" strokeLinejoin="round">
      {BORDERS.map((b) => <polyline key={b} points={b} />)}
    </g>
    <path d={COUNTIES} fill="#69785f" fillOpacity="0.750" stroke="#4c5548" />
    <g textAnchor="middle" paintOrder="stroke" strokeLinejoin="round">
      <g fontSize="14" fontWeight="700" fill="#000" stroke="#fff" strokeOpacity="0.600" strokeWidth="3">
        {BIG.map(([t, x, y]) => <text key={t} x={x} y={y}>{t}</text>)}
        <text x="1318" y="734" textAnchor="start">Uzbe</text>
        <text x="1338" y="852" textAnchor="start">A</text>
      </g>
      <g fontSize="11" fontWeight="700" fill="#111" stroke="#fff" strokeOpacity="0.600" strokeWidth="3">
        {SMALL.map(([t, x, y]) => <text key={t} x={x} y={y}>{t}</text>)}
      </g>
      <g fontSize="11" fontStyle="italic" fill="#1f2a4a" stroke="#d4dfeb" strokeOpacity="0.700" strokeWidth="3">
        {WATER.map(([t, x, y]) => <text key={t + x} x={x} y={y}>{t}</text>)}
      </g>
    </g>
    <text x="346" y="903" fontSize="20" fontFamily="Liberation Serif, serif" fill="#fff" stroke="#7d8fa3" strokeWidth="1" paintOrder="stroke">Google</text>
    <path d="M414 885v24M414 897H533v12M488 897v-12" stroke="#fff" strokeOpacity="0.600" strokeWidth="4" fill="none" />
    <path d="M414 885v24M414 897H533v12M488 897v-12" stroke="#000" strokeWidth="2" fill="none" />
    <g fontSize="11" fontFamily="Liberation Sans, sans-serif" fill="#111"><text x="420" y="889">500 km</text><text x="420" y="912">500 mi</text></g>
  </MapDrawing>
);

/* ---------- application ---------- */

const MENU: [string, string, string][] = [["", "F", "ile"], ["", "E", "dit"], ["", "V", "iew"], ["Hi", "s", "tory"], ["", "B", "ookmarks"], ["", "T", "ools"], ["", "H", "elp"]];
const ADMIN = ["Dashboard", "Content", "Structure", "Appearance", "People", "Modules", "Configuration", "Import", "Reports", "Help"];
const SECTIONS = ["Overview", "Conservation", "Description", "Evolution and Systematics", "Ecology and Distribution", "Relevance"];

const Bug = () => <><path d="M2 2l4 4M8 1v4M14 2l-4 4M0 8h5M11 8h5M2 15l4-4M8 11v4M14 15l-4-4" stroke="#111" /><circle cx="5.500" cy="8.500" r="3.500" fill="#15a815" stroke="#063" /><circle cx="11" cy="8" r="3" fill="#1fc41f" stroke="#063" /><path d="M4 7h2M10 7h2" stroke="#bfb" /></>;

export default function App() {
  return (
    <Window>
      <GlobalStyle />
      <TitleBar>
        <WindowButton $close aria-label="Close window"><Svg s={8}><path d="M1.500 1.500l5 5M6.500 1.500l-5 5" stroke="#6b2c17" /></Svg></WindowButton>
        <WindowButton aria-label="Minimise"><Svg s={8}><path d="M0 4.500h8" stroke="#777" /></Svg></WindowButton>
        <WindowButton aria-label="Maximise"><Svg s={8}><path d="M1.500 1.500h5v5h-5z" stroke="#777" /></Svg></WindowButton>
        <WindowTitle>Create Taxon Description | Scratchpad training site - Mozilla Firefox</WindowTitle>
      </TitleBar>
      <MenuBar>{MENU.map(([a, u, b]) => <a href="#menu" key={u + b}>{a}<u>{u}</u>{b}</a>)}</MenuBar>
      <TabStrip>
        {["Default + Assigned to me - Scratc…", "Feature #2109: Implement vice-co…", "Create Taxon Description | Scratc…"].map((t, i) => (
          <BrowserTab key={t} $active={i === 2}><GridIcon /><span>{t}</span><button aria-label="Close tab"><CloseIcon /></button></BrowserTab>
        ))}
        <NewTab aria-label="New tab"><Svg><path d="M6 1h4v5h5v4h-5v5H6v-5H1V6h5z" fill="#b5d84a" stroke="#6c9a24" /></Svg></NewTab>
      </TabStrip>
      <NavBar>
        <NavButtons>
          <IconButton aria-label="Back"><Svg><path d="M11 1.500L4.500 8l6.500 6.500" stroke="#dd5a2b" strokeWidth="3" /><path d="M11 1.500L4.500 8" stroke="#f39a6b" /></Svg></IconButton>
          <IconButton aria-label="Forward"><Svg><path d="M5 2l6 6-6 6" stroke="#d5d1cd" strokeWidth="3" /></Svg></IconButton>
          <IconButton aria-label="Bug"><Svg><Bug /></Svg></IconButton>
          <IconButton $w={36} aria-label="Bug window">
            <Svg w={32}><path d="M.5 1.500h15v13H.5z" fill="#d9ecff" stroke="#2168c8" /><path d="M1 3h14" stroke="#2a7be0" strokeWidth="3" /><path d="M2 12l2-4 3 2 3-3 3 5z" fill="#139c2c" stroke="#0a5" /><path d="M23 7h8l-4 5z" fill="#777" /></Svg>
          </IconButton>
          <IconButton $w={24} aria-label="Library"><Svg><path d="M.5 3.500l5-1v12h-5z" fill="#2b79e8" stroke="#123" /><path d="M5.500 4.500h5v11h-5z" fill="#f0c020" stroke="#653" /><path d="M10.500 1.500l5-1v12l-5 1z" fill="#38b840" stroke="#143" /><path d="M8 8h3v5H8z" fill="#d33" /></Svg></IconButton>
          <IconButton aria-label="StumbleUpon"><Svg><circle cx="8" cy="8" r="8" fill="#eb4924" /><path d="M3.500 8v1.500a1.500 1.500 0 003 0v-3a1.500 1.500 0 013 0V7M12.500 8v1.500a1.500 1.500 0 01-3 0V8.500" stroke="#fff" strokeWidth="1.600" /></Svg></IconButton>
        </NavButtons>
        <Field>
          <IconButton aria-label="Site identity"><Svg><circle cx="8" cy="8" r="7" fill="#999" /><path d="M3 5l4-2 2 2-3 4-3-1zM9 8l4-2 1 3-3 4z" fill="#eee" /></Svg></IconButton>
          <AddressInput aria-label="Address" defaultValue="http://maps.taxon.name/#overlay=node/add/spm" />
          <IconButton $w={16} aria-label="Bookmark page"><Svg><path d="M8 1l2 5h5l-4 3.500 1.500 5L8 11.500l-4.500 3 1.500-5L1 6h5z" stroke="#ccc" fill="#fff" /></Svg></IconButton>
          <IconButton $w={12} aria-label="History"><Caret /></IconButton>
          <IconButton aria-label="Reload"><Svg><path d="M12.500 10.500A5.500 5.500 0 1111 3.500" stroke="#5b93c7" strokeWidth="3" /><path d="M15 1v7H8z" fill="#5b93c7" /></Svg></IconButton>
        </Field>
        <Field $width={263}>
          <IconButton $w={16} aria-label="Google"><Svg><rect width="16" height="16" rx="1" fill="#4a7df0" /><circle cx="7.500" cy="5" r="2.500" stroke="#fff" strokeWidth="1.500" /><ellipse cx="8" cy="12" rx="3.500" ry="2.200" stroke="#fff" strokeWidth="1.500" /><path d="M9 2h3M8 7.500l1 2" stroke="#fff" /></Svg></IconButton>
          <IconButton $w={10} aria-label="Search engines"><Caret /></IconButton>
          <SearchInput aria-label="Search" defaultValue="virgin west coast" />
          <IconButton aria-label="Go"><Svg><circle cx="7" cy="7" r="5.500" stroke="#27418c" strokeWidth="2.500" fill="#e5edfa" /><path d="M11 11l4 4" stroke="#222" strokeWidth="3" /></Svg></IconButton>
        </Field>
        <IconButton $w={18} aria-label="Downloads"><Svg><path d="M5.500 1h5v7h4L8 15 1.500 8h4z" fill="#8de22c" stroke="#48a010" /></Svg></IconButton>
        <IconButton $w={18} aria-label="Fly"><Svg><ellipse cx="8" cy="8" rx="5" ry="2.500" transform="rotate(-20 8 8)" fill="#666" /><circle cx="12.500" cy="5.500" r="2" fill="#333" /><path d="M1 6l6 1M2 12l4-3M8 13l1-4M13 11l-3-3" stroke="#888" /></Svg></IconButton>
        <IconButton $w={10} aria-label="More"><Caret /></IconButton>
      </NavBar>
      <Viewport>
        <Page>
          <AdminBar>
            <a href="#home" aria-label="Home"><Svg s={12} w={12}><path d="M6 0l6 6h-2v5H7V8H5v3H2V6H0z" fill="#fff" /></Svg></a>
            {ADMIN.map((t) => <a href="#admin" key={t}>{t}</a>)}
            <Grow />
            <span>Hello <b>Scratchpad Team</b></span>
            <a href="#logout">Log out</a>
            <DrawerToggle aria-label="Toggle shortcuts"><Caret fill="#000" /></DrawerToggle>
          </AdminBar>
          <ShortcutBar><a href="#shortcuts">Edit shortcuts</a></ShortcutBar>
          <IssuesTab>Issues...</IssuesTab>
          <Backdrop>
            <Panel>
              <Crumbs>
                {["Home", "Administration", "Content", "Taxon Description"].map((t) => (
                  <Crumb href="#crumb" key={t}>{t}<Svg s={29} w={10}><path d="M0 0l9 14.500L0 29" stroke="#4f4f4f" /><path d="M1 0l9 14.500L1 29" stroke="#757575" /></Svg></Crumb>
                ))}
                <Grow />
                <PanelButton aria-label="Help"><b>?</b></PanelButton>
                <PanelButton aria-label="Add shortcut"><Svg s={8}><path d="M4 0v8M0 4h8" stroke="#fff" strokeWidth="2" /></Svg></PanelButton>
                <PanelButton aria-label="Close overlay"><Svg s={8}><path d="M1 1l6 6M7 1L1 7" stroke="#fff" strokeWidth="2" /></Svg></PanelButton>
              </Crumbs>
              <PanelBody>
                <Heading>
                  <h2>
                    <Svg s={30} w={30}>
                      <ellipse cx="13" cy="28" rx="11" ry="2" fill="#ddd" />
                      <path d="M.5 1.500H17l4.500 4.500v21.500H.5z" fill="#e2e2e2" stroke="#aaa" /><path d="M2 3h14v4h4v13H2z" fill="#fafafa" /><path d="M17 1.500V6h4.500" stroke="#bbb" fill="#fff" />
                      <path d="M7 9.500h8M7 12.500h8M7 15.500h8M7 18.500h8" stroke="#bbb" />
                      <rect x="21" y="9" width="9" height="11" rx="2" fill="#3cc24c" /><path d="M25.500 12v5M23 14.500h5" stroke="#fff" />
                    </Svg>
                    Create Taxon Description
                  </h2>
                  <ImportButton href="#import"><Svg s={10}><path d="M5 1v8M1 5h8" stroke="#fff" strokeWidth="2" /></Svg>Import into: Taxon Description</ImportButton>
                </Heading>
                <NameBox><label htmlFor="taxon">Taxonomic name <b>*</b></label><input id="taxon" type="text" /></NameBox>
                <Tabbed>
                  <TabColumn>{SECTIONS.map((t, i) => <TabItem key={t} $active={i === 4}><a href="#section">{t}</a></TabItem>)}</TabColumn>
                  <Pane>
                    <MapBox>
                      <h3>Map</h3>
                      <MapRow>
                        <MapTools><MapTool>Move</MapTool><MapTool>+ Polygon</MapTool><MapTool $on>+ Region</MapTool></MapTools>
                        <MapCanvas>
                          <EuropeMap />
                          <Zoomer>
                            <ZoomKey aria-label="Zoom in"><Svg s={8}><path d="M4 0v8M0 4h8" stroke="#777" strokeWidth="2" /></Svg></ZoomKey>
                            <ZoomRail $h={88} />
                            <ZoomKey $h={9} aria-label="Zoom level"><Svg s={2} w={8}><path d="M0 1h8" stroke="#777" strokeWidth="2" /></Svg></ZoomKey>
                            <ZoomRail $h={17} />
                            <ZoomKey aria-label="Zoom out"><Svg s={8}><path d="M0 4h8" stroke="#777" strokeWidth="2" /></Svg></ZoomKey>
                          </Zoomer>
                          <MapNotice>Selecting by vice county (Level 5) - UK Only</MapNotice>
                          <MapTypes><button>Map</button><button>Satellite</button></MapTypes>
                          <MapCredit>Map data ©2013 Basarsoft, Google, MapIT, MapLink, ORION-ME, SK planet, ZENRIN - <a href="#terms">Terms of Use</a></MapCredit>
                        </MapCanvas>
                      </MapRow>
                    </MapBox>
                    <EditorLabel id="dispersal">Dispersal</EditorLabel>
                    <Editor>
                      <EditorTools>
                        <ToolRows>
                          <ToolRow>
                            <ToolGroup><T name="bold" /><T name="italic" /><T name="underline" /></ToolGroup>
                            <ToolGroup><T name="left" /><T name="center" /><T name="right" /><T name="justify" /></ToolGroup>
                            <ToolGroup><T name="ol" /><T name="ul" /><ToolDivider /><T name="sub" /><T name="sup" /><T name="quote" /></ToolGroup>
                            <ToolGroup><T name="link" /><T name="link" off /><T name="anchorLink" /><T name="flag" /></ToolGroup>
                          </ToolRow>
                          <ToolRow>
                            <ToolGroup><T name="select" /><T name="cut" off /><T name="copy" off /><T name="paste" /><T name="pasteText" /><T name="pasteWord" /></ToolGroup>
                            <ToolGroup><T name="spell" /><Tool $on aria-label="Spell check as you type"><Svg>{icons.spell}</Svg><Svg s={4} w={10}><path d="M4 0h6L7 3.500z" fill="#000" /></Svg></Tool></ToolGroup>
                            <ToolGroup><T name="undo" off /><T name="redo" off /><T name="find" /><T name="replace" /><ToolDivider /><T name="erase" /></ToolGroup>
                            <ToolGroup><T name="image" /><T name="table" /><T name="rule" /><T name="omega" /><T name="pagebreak" /></ToolGroup>
                            <ToolGroup><T name="maximize" /></ToolGroup>
                          </ToolRow>
                        </ToolRows>
                        <Collapse aria-label="Collapse toolbar"><Svg s={4} w={6}><path d="M0 4h6L3 0z" fill="#000" /></Svg></Collapse>
                      </EditorTools>
                      <EditorText role="textbox" aria-labelledby="dispersal" contentEditable suppressContentEditableWarning />
                    </Editor>
                  </Pane>
                </Tabbed>
              </PanelBody>
            </Panel>
          </Backdrop>
        </Page>
        <ScrollTrack>
          <ScrollStep aria-label="Scroll up"><Svg s={4} w={6}><path d="M0 4h6L3 0z" fill="#aaa" /></Svg></ScrollStep>
          <ScrollThumb><Svg s={8} w={4}><path d="M0 .5h4M0 3.500h4M0 6.500h4" stroke="#aaa" /></Svg></ScrollThumb>
          <ScrollSpace />
          <ScrollStep aria-label="Scroll down"><Svg s={4} w={6}><path d="M0 0h6L3 4z" fill="#777" /></Svg></ScrollStep>
        </ScrollTrack>
      </Viewport>
      <Pointer width="14" height="22" viewBox="0 0 14 22"><path d="M1.500 1.500v16l4-3.500 2.500 6 3-1.200-2.700-5.800h4.500z" fill="#fff" stroke="#000" /></Pointer>
    </Window>
  );
}
